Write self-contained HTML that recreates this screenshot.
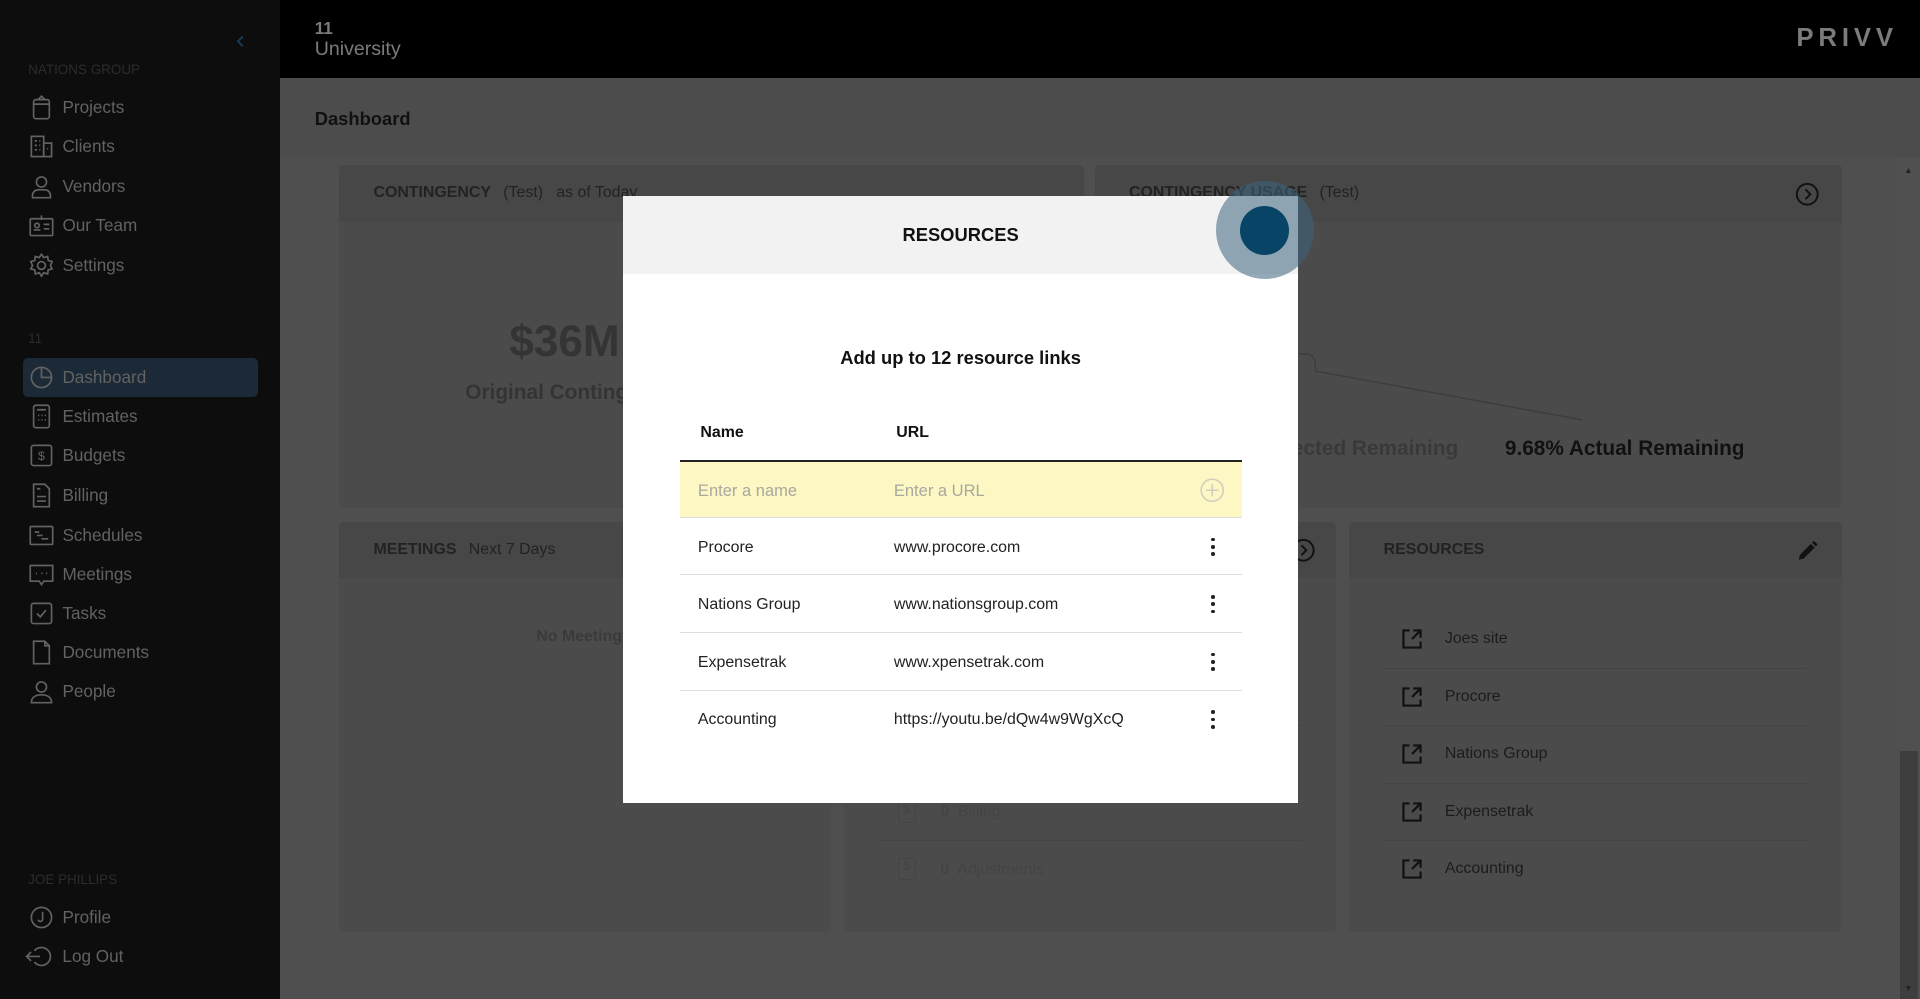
<!DOCTYPE html>
<html><head><meta charset="utf-8"><style>
html{zoom:1.22449}
*{box-sizing:border-box;margin:0;padding:0}
body{width:1568px;height:816px;overflow:hidden;background:#4f4f4f;font-family:"Liberation Sans",sans-serif;position:relative}
.a{position:absolute}
.side{left:0;top:0;width:229px;height:816px;background:#0d0d0d}
.nav{position:absolute;left:23px;color:#626262;font-size:14px;display:flex;align-items:center;height:22px}
.nav svg{width:22px;height:22px;margin-right:6px;stroke:#626262;fill:none;stroke-width:1.5}
.sec{position:absolute;left:23px;font-size:11px;color:#2c2c2c}
.top{left:229px;top:0;width:1339px;height:64px;background:#000}
.card{position:absolute;background:#4b4b4b;border-radius:4px}
.ch{height:46px;background:#474747;border-radius:4px 4px 0 0;padding:0 28px;display:flex;align-items:center;font-size:13px;color:#222}
.ch b{margin-right:10px}
.rl{position:absolute;left:28px;right:28px;height:47px;border-bottom:1px solid #444;display:flex;align-items:center;font-size:13px;color:#1c1c1c}
.rl svg{margin:0 18px 0 14px}
.modal{left:509px;top:160px;width:551px;height:496px;background:#fff}
.mh{height:64px;background:#f2f2f2;display:flex;align-items:center;justify-content:center;font-weight:bold;font-size:15px;color:#111}
.row{position:absolute;left:46px;width:459px;height:47px;border-bottom:1px solid #ddd;font-size:13px;color:#222}
.row span{position:absolute;top:17px}
.kb{position:absolute;left:434px;top:16px;width:3px}
.kb i{display:block;width:3px;height:3px;background:#222;border-radius:50%;margin-bottom:3px}
</style></head><body>
<div class="a side">
  <svg class="a" style="left:190px;top:28px" width="12" height="12" viewBox="0 0 12 12"><path d="M8 2L4 6l4 4" stroke="#1f3b50" stroke-width="1.5" fill="none"/></svg>
  <div class="sec" style="top:51px">NATIONS GROUP</div>
  <div class="nav" style="top:77px"><svg viewBox="0 0 24 24"><rect x="5" y="5" width="14" height="17" rx="2"/><path d="M5 9h14M9 5l3-3 3 3"/></svg>Projects</div>
  <div class="nav" style="top:109px"><svg viewBox="0 0 24 24"><rect x="3" y="3" width="11" height="18"/><rect x="14" y="9" width="7" height="12"/><path d="M6 7h2M10 7h1M6 11h2M10 11h1M6 15h2M10 15h1M17 14h1"/></svg>Clients</div>
  <div class="nav" style="top:141px"><svg viewBox="0 0 24 24"><circle cx="12" cy="8" r="4.5"/><path d="M4 22v-2a5 5 0 015-5h6a5 5 0 015 5v2z"/></svg>Vendors</div>
  <div class="nav" style="top:173px"><svg viewBox="0 0 24 24"><rect x="2" y="6" width="20" height="15" rx="1"/><path d="M12 3v4M5 16h6M14 11h5M14 15h5"/><circle cx="8" cy="12" r="2"/></svg>Our Team</div>
  <div class="nav" style="top:206px"><svg viewBox="0 0 24 24"><circle cx="12" cy="12" r="3.5"/><path d="M12 2l2 3 3.5-1 .5 3.5 3.5 1-1.5 3.5 1.5 3-3.5 1-.5 3.5-3.5-1-2 3-2-3-3.5 1-.5-3.5-3.5-1 1.5-3-1.5-3.5 3.5-1 .5-3.5 3.5 1z"/></svg>Settings</div>
  <div class="sec" style="top:270px">11</div>
  <div class="a" style="left:19px;top:292px;width:192px;height:32px;background:#1b2a36;border-radius:4px"></div>
  <div class="nav" style="top:297px"><svg viewBox="0 0 24 24"><circle cx="12" cy="12" r="9"/><path d="M12 3v9h9" /></svg>Dashboard</div>
  <div class="nav" style="top:329px"><svg viewBox="0 0 24 24"><rect x="5" y="2" width="14" height="20" rx="2"/><path d="M8 6h8M9 11h1M12 11h1M15 11h1M9 15h1M12 15h1M15 15h1"/></svg>Estimates</div>
  <div class="nav" style="top:361px"><svg viewBox="0 0 24 24"><rect x="3" y="3" width="18" height="18" rx="2"/><text x="12" y="16" font-size="11" text-anchor="middle" fill="#626262" stroke="none">$</text></svg>Budgets</div>
  <div class="nav" style="top:394px"><svg viewBox="0 0 24 24"><path d="M5 2h10l4 4v16H5z"/><path d="M8 13h8M8 17h8M8 6h3"/></svg>Billing</div>
  <div class="nav" style="top:426px"><svg viewBox="0 0 24 24"><rect x="2" y="4" width="20" height="16" rx="1"/><path d="M6 9h4M8 12h5M12 15h6"/></svg>Schedules</div>
  <div class="nav" style="top:458px"><svg viewBox="0 0 24 24"><path d="M2 4h20v14H14l-2 3-2-3H2z"/><path d="M7 11h1M12 11h1M16 11h1"/></svg>Meetings</div>
  <div class="nav" style="top:490px"><svg viewBox="0 0 24 24"><rect x="3" y="3" width="18" height="18" rx="2"/><path d="M8 12l3 3 5-6"/></svg>Tasks</div>
  <div class="nav" style="top:522px"><svg viewBox="0 0 24 24"><path d="M5 2h10l4 4v16H5z"/><path d="M15 2v4h4"/></svg>Documents</div>
  <div class="nav" style="top:554px"><svg viewBox="0 0 24 24"><circle cx="12" cy="8" r="4.5"/><path d="M3 22c0-5 4-7 9-7s9 2 9 7z"/></svg>People</div>
  <div class="sec" style="top:712px">JOE PHILLIPS</div>
  <div class="nav" style="top:738px"><svg viewBox="0 0 24 24"><circle cx="12" cy="12" r="9"/><path d="M13 7v6a2 2 0 01-4 1"/></svg>Profile</div>
  <div class="nav" style="top:770px;left:19px"><svg viewBox="0 0 24 24" style="width:26px"><path d="M8 7a8 8 0 110 10M1 12h12M5 8l-4 4 4 4"/></svg>Log Out</div>
</div>
<div class="a top">
  <div class="a" style="left:28px;top:15px;color:#7b7b7b;font-size:14px;font-weight:bold">11</div>
  <div class="a" style="left:28px;top:31px;color:#7b7b7b;font-size:16px">University</div>
  <div class="a" style="right:18px;top:20px;color:#7b7b7b;font-size:21px;font-weight:bold;letter-spacing:4px">PRIVV</div>
</div>
<div class="a" style="left:229px;top:64px;width:1339px;height:64px;background:#4c4c4c"></div>
<div class="a" style="left:257px;top:88px;font-size:15px;font-weight:bold;color:#111">Dashboard</div>
<div class="a" style="left:1550px;top:128px;width:18px;height:688px;background:#505050"></div>
<div class="a" style="left:1552px;top:613px;width:14px;height:203px;background:#3e3e3e"></div>
<div class="a" style="left:1555px;top:135px;font-size:7px;color:#222">▲</div>
<div class="a" style="left:1555px;top:803px;font-size:7px;color:#222">▼</div>

<div class="card" style="left:277px;top:135px;width:608px;height:280px"><div class="ch"><b>CONTINGENCY</b>(Test)&nbsp;&nbsp; as of Today</div>
  <div class="a" style="left:139px;top:124px;font-size:36px;font-weight:bold;color:#343434">$36M</div>
  <div class="a" style="left:103px;top:176px;font-size:17px;font-weight:bold;color:#343434">Original Contingency</div>
</div>
<div class="card" style="left:894px;top:135px;width:610px;height:280px"><div class="ch"><b>CONTINGENCY USAGE</b>(Test)</div>
  <svg class="a" style="left:572px;top:14px" width="20" height="20" viewBox="0 0 20 20"><circle cx="10" cy="10" r="8.5" stroke="#111" stroke-width="1.6" fill="none"/><path d="M8.5 6l4 4-4 4" stroke="#111" stroke-width="1.6" fill="none"/></svg>
  <svg class="a" style="left:160px;top:150px" width="250" height="60"><path d="M6 4h8q6 2 6 10v4l218 40" stroke="#3d3d3d" stroke-width="1.2" fill="none"/></svg>
  <div class="a" style="left:161px;top:222px;font-size:17px;font-weight:bold;color:#393939">ected Remaining</div>
  <div class="a" style="left:335px;top:222px;font-size:17px;font-weight:bold;color:#111">9.68% Actual Remaining</div>
</div>
<div class="card" style="left:277px;top:426px;width:402px;height:335px"><div class="ch"><b>MEETINGS</b>Next 7 Days</div>
  <div class="a" style="left:161px;top:87px;font-size:13px;font-weight:bold;color:#3a3a3a">No Meetings</div>
</div>
<div class="card" style="left:689px;top:426px;width:402px;height:335px"><div class="ch"></div>
  <svg class="a" style="left:365px;top:13px" width="20" height="20" viewBox="0 0 20 20"><circle cx="10" cy="10" r="8.5" stroke="#111" stroke-width="1.6" fill="none"/><path d="M8.5 6l4 4-4 4" stroke="#111" stroke-width="1.6" fill="none"/></svg>
  <div class="a" style="left:28px;top:166px;width:346px;border-top:1px solid #444"></div>
  <div class="a" style="left:28px;top:260px;width:346px;border-top:1px solid #444"></div>
  <div class="a" style="left:44px;top:228px;width:15px;height:18px;border:1.5px solid #444;border-radius:2px;font-size:10px;color:#444;text-align:center">$</div>
  <div class="a" style="left:79px;top:230px;font-size:13px;color:#444"><b>0</b>&nbsp; Billing</div>
  <div class="a" style="left:44px;top:275px;width:15px;height:18px;border:1.5px solid #444;border-radius:2px;font-size:10px;color:#444;text-align:center">$</div>
  <div class="a" style="left:79px;top:277px;font-size:13px;color:#444"><b>0</b>&nbsp; Adjustments</div>
</div>
<div class="card" style="left:1102px;top:426px;width:402px;height:335px"><div class="ch"><b>RESOURCES</b></div>
  <svg class="a" style="left:364px;top:14px" width="20" height="20" viewBox="0 0 20 20"><path d="M3 17l1-4 9-9 3 3-9 9z" fill="#111"/><path d="M14 3l1.5-1.5 3 3L17 6z" fill="#111"/></svg>
  <div class="rl" style="top:73px"><svg width="18" height="18" viewBox="0 0 18 18" fill="none" stroke="#111" stroke-width="1.8"><path d="M7 2H2v14h14v-5M10 2h6v6M16 2l-7 7"/></svg>Joes site</div>
  <div class="rl" style="top:120px"><svg width="18" height="18" viewBox="0 0 18 18" fill="none" stroke="#111" stroke-width="1.8"><path d="M7 2H2v14h14v-5M10 2h6v6M16 2l-7 7"/></svg>Procore</div>
  <div class="rl" style="top:167px"><svg width="18" height="18" viewBox="0 0 18 18" fill="none" stroke="#111" stroke-width="1.8"><path d="M7 2H2v14h14v-5M10 2h6v6M16 2l-7 7"/></svg>Nations Group</div>
  <div class="rl" style="top:214px"><svg width="18" height="18" viewBox="0 0 18 18" fill="none" stroke="#111" stroke-width="1.8"><path d="M7 2H2v14h14v-5M10 2h6v6M16 2l-7 7"/></svg>Expensetrak</div>
  <div class="rl" style="top:260px;border:none"><svg width="18" height="18" viewBox="0 0 18 18" fill="none" stroke="#111" stroke-width="1.8"><path d="M7 2H2v14h14v-5M10 2h6v6M16 2l-7 7"/></svg>Accounting</div>
</div>

<div class="a modal">
  <div class="mh">RESOURCES</div>
  <div class="a" style="left:0;width:551px;top:123px;text-align:center;font-size:15px;font-weight:bold;color:#111">Add up to 12 resource links</div>
  <div class="a" style="left:63px;top:186px;font-size:13px;font-weight:bold;color:#111">Name</div>
  <div class="a" style="left:223px;top:186px;font-size:13px;font-weight:bold;color:#111">URL</div>
  <div class="row" style="top:216px;height:47px;background:#fdf8c3;border-top:2px solid #222"><span style="left:15px;top:15px;color:#a8a8a0;font-size:13.5px">Enter a name</span><span style="left:175px;top:15px;color:#a8a8a0;font-size:13.5px">Enter a URL</span>
    <svg class="a" style="left:425px;top:13px" width="20" height="20" viewBox="0 0 20 20" fill="none" stroke="#cfcfc0" stroke-width="1.3"><circle cx="10" cy="10" r="9"/><path d="M10 5v10M5 10h10"/></svg></div>
  <div class="row" style="top:263px"><span style="left:15px">Procore</span><span style="left:175px">www.procore.com</span><div class="kb"><i></i><i></i><i></i></div></div>
  <div class="row" style="top:310px"><span style="left:15px">Nations Group</span><span style="left:175px">www.nationsgroup.com</span><div class="kb"><i></i><i></i><i></i></div></div>
  <div class="row" style="top:357px"><span style="left:15px">Expensetrak</span><span style="left:175px">www.xpensetrak.com</span><div class="kb"><i></i><i></i><i></i></div></div>
  <div class="row" style="top:404px;border:none"><span style="left:15px">Accounting</span><span style="left:175px">https://youtu.be/dQw4w9WgXcQ</span><div class="kb"><i></i><i></i><i></i></div></div>
</div>
<div class="a" style="left:993px;top:148px;width:80px;height:80px;border-radius:50%;background:rgba(60,100,125,0.55)"></div>
<div class="a" style="left:1013px;top:168px;width:40px;height:40px;border-radius:50%;background:#074465"></div>
</body></html>
